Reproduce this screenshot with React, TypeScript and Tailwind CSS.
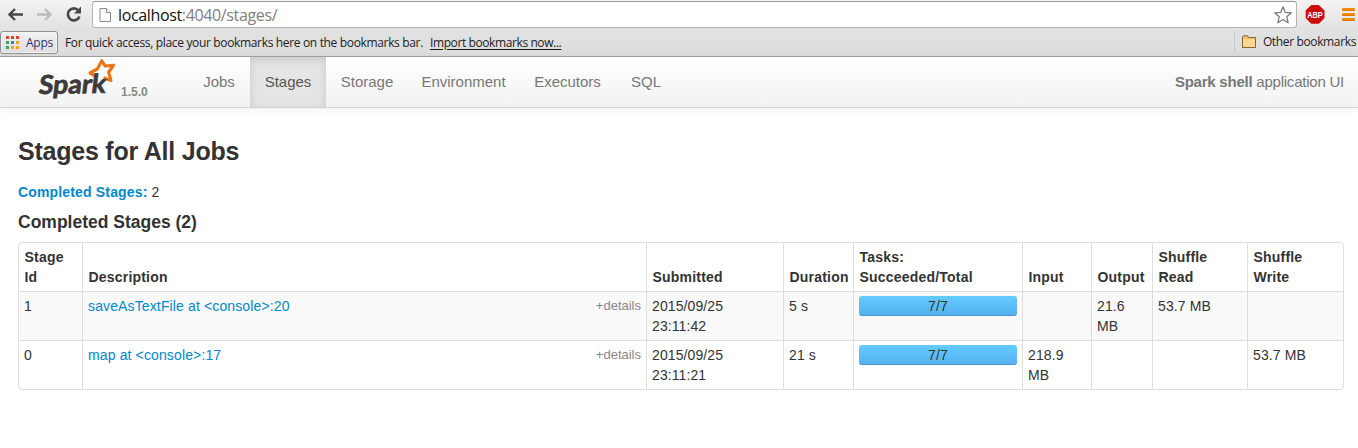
import React from "react";

const tabs = [
  { label: "Jobs", width: "w-[62px]" },
  { label: "Stages", width: "w-[76px]", active: true },
  { label: "Storage", width: "w-[82px]" },
  { label: "Environment", width: "w-[111px]" },
  { label: "Executors", width: "w-[97px]" },
  { label: "SQL", width: "w-[60px]" },
];

const columns = [
  { lines: ["Stage", "Id"], width: "w-[63px]" },
  { lines: ["Description"], width: "w-[564px]" },
  { lines: ["Submitted"], width: "w-[137px]" },
  { lines: ["Duration"], width: "w-[70px]" },
  { lines: ["Tasks:", "Succeeded/Total"], width: "w-[169px]" },
  { lines: ["Input"], width: "w-[69px]" },
  { lines: ["Output"], width: "w-[61px]" },
  { lines: ["Shuffle", "Read"], width: "w-[95px]" },
  { lines: ["Shuffle", "Write"], width: "w-[96px]" },
];

const stages = [
  {
    id: "1",
    name: "saveAsTextFile at <console>:20",
    submitted: ["2015/09/25", "23:11:42"],
    duration: "5 s",
    tasks: "7/7",
    input: [""],
    output: ["21.6", "MB"],
    read: "53.7 MB",
    write: "",
  },
  {
    id: "0",
    name: "map at <console>:17",
    submitted: ["2015/09/25", "23:11:21"],
    duration: "21 s",
    tasks: "7/7",
    input: ["218.9", "MB"],
    output: [""],
    read: "",
    write: "53.7 MB",
  },
];

const appColors = [
  "#ea3d2f", "#ea3d2f", "#ea3d2f",
  "#3aa757", "#2f7de1", "#f2a60d",
  "#3aa757", "#f2a60d", "#f2a60d",
];

function Lines({ lines }: { lines: string[] }) {
  return (
    <>
      {lines.map((line, i) => (
        <div key={i}>{line}</div>
      ))}
    </>
  );
}

function Toolbar() {
  return (
    <div className="flex h-[29px] items-start bg-linear-to-b from-[#f3f3f3] to-[#e2e2e2]">
      <svg className="mt-1 ml-2 h-5 w-[84px] shrink-0" viewBox="0 0 84 20" fill="none">
        <path d="M15 10.5H2M7 5L1.5 10.5L7 16" stroke="#484848" strokeWidth="2.4" />
        <path d="M29 10.5H42M37 5L42.5 10.5L37 16" stroke="#bcbcbc" strokeWidth="2.4" />
        <path d="M70.5 6.5A6 6 0 1 0 71.5 12.5" stroke="#484848" strokeWidth="2.6" />
        <path d="M73 2.5V9.5H66Z" fill="#484848" />
      </svg>
      <div className="mt-px flex h-[27px] w-[1205px] items-center rounded-[3px] border border-[#b4b4b4] border-t-[#9c9c9c] bg-white">
        <svg className="ml-[6px] h-[16px] w-[13px]" viewBox="0 0 13 16" fill="#fcfcfc" stroke="#8c8c8c">
          <path d="M1 1.5H7.5L11.5 5.5V14.5H1Z" />
          <path d="M7.5 1.5V5.5H11.5" />
        </svg>
        <div className="ml-[6px] font-['Open_Sans','Noto_Sans',sans-serif] text-[16px] leading-6 tracking-[-0.36px] whitespace-nowrap text-[#808080]">
          <span className="text-[#111]">localhost</span>:4040/stages/
        </div>
        <svg className="mr-[3px] ml-auto h-[20px] w-[20px]" viewBox="0 0 20 20" fill="white" stroke="#777" strokeWidth="1.2" strokeLinejoin="round">
          <path d="M10 1.8L12.3 7.4L18.4 7.8L13.7 11.7L15.2 17.8L10 14.5L4.8 17.8L6.3 11.7L1.6 7.8L7.7 7.4Z" />
        </svg>
      </div>
      <svg className="mt-[4px] ml-[8px] h-[20px] w-[20px] shrink-0 overflow-visible" viewBox="0 0 20 20">
        <path d="M6.2 1H13.8L19.5 6.4V14L13.8 19.7H6.2L0.7 14V6.4Z" fill="#cc0b0b" />
        <text x="10" y="13.9" textAnchor="middle" textLength="15.5" lengthAdjust="spacingAndGlyphs" fill="white" fontSize="9.5" fontWeight="700" fontFamily="Liberation Sans, sans-serif">ABP</text>
      </svg>
      <div className="mt-[8px] ml-[17px] flex w-[13px] flex-col gap-[2px]">
        <div className="h-[3px] rounded-[1px] border-b border-[#d87800] bg-[#f28b0c]" />
        <div className="h-[3px] rounded-[1px] border-b border-[#d87800] bg-[#f28b0c]" />
        <div className="h-[3px] rounded-[1px] border-b border-[#d87800] bg-[#f28b0c]" />
      </div>
    </div>
  );
}

function BookmarksBar() {
  return (
    <div className="flex h-[28px] items-start border-b border-[#a0a0a0] bg-linear-to-b from-[#e2e2e2] to-[#dcdcdc] font-['Open_Sans','Noto_Sans',sans-serif] text-[12px] leading-[16px] whitespace-nowrap text-[#1c1c1c]">
      <div className="mt-[2px] flex h-[23px] w-[58px] items-center rounded-[3px] border border-[#8f8f8f] bg-linear-to-b from-[#f2f2f2] to-[#dedede] shadow-[inset_0_0_0_1px_#f4f4f4]">
        <div className="ml-[5px] grid grid-cols-3 gap-[2px]">
          {appColors.map((c, i) => (
            <div key={i} className="h-[3px] w-[3px]" style={{ background: c }} />
          ))}
        </div>
        <span className="ml-[7px] tracking-[-0.25px] text-[#2b3568]">Apps</span>
      </div>
      <span className="mt-[6px] ml-[7px] tracking-[-0.34px]">For quick access, place your bookmarks here on the bookmarks bar.</span>
      <span className="mt-[6px] ml-[7px] tracking-[-0.4px] underline underline-offset-2">Import bookmarks now...</span>
      <div className="mt-[2px] ml-auto h-[22px] w-px bg-[#c4ccd2]" />
      <svg className="mt-[6px] ml-[6px] h-[14px] w-[16px]" viewBox="0 0 16 14" stroke="#8a6238">
        <path d="M1.5 12.5V1.8L2.5 0.8H6.5L7.5 2.5H14.5V12.5Z" fill="#f3bd6b" />
        <path d="M1.5 12.5V4.2H14.5V12.5Z" fill="#fbd792" stroke="none" />
        <path d="M1.5 3.5V12.5H14.5V3" fill="none" />
      </svg>
      <span className="mt-[5px] mr-[2px] ml-[6px] tracking-[-0.36px]">Other bookmarks</span>
    </div>
  );
}

function SparkLogo() {
  return (
    <svg className="ml-[36px] h-[44px] w-[82px] shrink-0 overflow-visible" viewBox="0 0 82 44">
      <path d="M60 19.5L54 16L61.3 12L65.8 3.8L69.2 9L77.5 8.3L72.6 15.2L75 23.5L67.5 20.8" fill="none" stroke="#e8771b" strokeWidth="3.2" strokeLinejoin="round" />
      <g transform="translate(2 37) rotate(-1) skewX(-8)">
        <text x="0" y="0" textLength="67" lengthAdjust="spacingAndGlyphs" fontFamily="Lato, sans-serif" fontSize="26" fontWeight="700" fill="#3c3a3a" stroke="#3c3a3a" strokeWidth="0.8">Spark</text>
      </g>
    </svg>
  );
}

function Navbar() {
  return (
    <div className="flex h-[51px] items-start border-b border-[#d4d4d4] bg-linear-to-b from-white to-[#f2f2f2] text-[15px] leading-5 text-[#777] shadow-[0_1px_8px_rgba(0,0,0,0.07)]">
      <SparkLogo />
      <span className="mt-[25px] ml-[3px] w-[27px] text-[12px] font-bold whitespace-nowrap text-[#888]">1.5.0</span>
      <nav className="ml-[40px] flex">
        {tabs.map((tab) => (
          <div
            key={tab.label}
            className={`${tab.width} flex h-[50px] items-center justify-center whitespace-nowrap ${
              tab.active ? "bg-[#e5e5e5] text-[#555] shadow-[inset_0_3px_8px_rgba(0,0,0,0.125)]" : ""
            }`}
          >
            {tab.label}
          </div>
        ))}
      </nav>
      <span className="mt-[15px] mr-[14px] ml-auto tracking-[-0.23px] whitespace-nowrap">
        <b>Spark shell</b> application UI
      </span>
    </div>
  );
}

function StageTable() {
  const cell = "h-[49px] border-t border-l border-[#ddd] px-[5px] pt-1 align-top first:border-l-0";
  return (
    <div className="mt-[10px] w-[1326px] overflow-hidden rounded-[4px] border border-[#ddd]">
      <table className="w-[1324px] table-fixed border-separate border-spacing-0 text-left tracking-[0.1px]">
        <thead>
          <tr>
            {columns.map((col, i) => (
              <th
                key={i}
                className={`${col.width} h-[48px] border-l border-[#ddd] pr-0 pl-[5.5px] pb-1 align-bottom font-bold tracking-[0.2px] whitespace-nowrap first:border-l-0`}
              >
                <Lines lines={col.lines} />
              </th>
            ))}
          </tr>
        </thead>
        <tbody className="whitespace-nowrap">
          {stages.map((s) => (
            <tr key={s.id} className="odd:bg-[#f9f9f9]">
              <td className={cell}>{s.id}</td>
              <td className={cell}>
                <div className="flex justify-between">
                  <a className="tracking-[0.13px] text-[#0088cc]">{s.name}</a>
                  <span className="text-[13px] tracking-normal text-[#888]">+details</span>
                </div>
              </td>
              <td className={cell}><Lines lines={s.submitted} /></td>
              <td className={cell}>{s.duration}</td>
              <td className={cell}>
                <div className="h-5 w-[158px] rounded-[3px] bg-linear-to-b from-[#64cbff] to-[#54b0f0] text-center shadow-[inset_0_-1px_0_rgba(0,0,0,0.15)]">
                  {s.tasks}
                </div>
              </td>
              <td className={cell}><Lines lines={s.input} /></td>
              <td className={cell}><Lines lines={s.output} /></td>
              <td className={cell}>{s.read}</td>
              <td className={cell}>{s.write}</td>
            </tr>
          ))}
        </tbody>
      </table>
    </div>
  );
}

export default function App() {
  return (
    <div className="h-[448px] w-[1358px] overflow-hidden bg-white font-['Liberation_Sans',Arial,sans-serif] text-[14px] leading-5 text-[#333]">
      <Toolbar />
      <BookmarksBar />
      <Navbar />
      <main className="pt-[23px] pl-[18px]">
        <h3 className="text-[25px] leading-10 font-bold tracking-[-0.23px]">Stages for All Jobs</h3>
        <div className="mt-[11px]">
          <b className="tracking-[0.16px] text-[#0088cc]">Completed Stages:</b> 2
        </div>
        <h4 className="mt-[10px] text-[17.5px] leading-5 font-bold">Completed Stages (2)</h4>
        <StageTable />
      </main>
    </div>
  );
}
